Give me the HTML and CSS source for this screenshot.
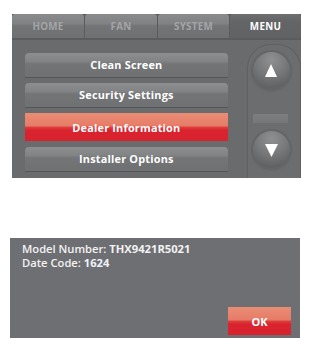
FILE: index.html
```html
<!DOCTYPE html>
<html>
<head>
<meta charset="utf-8">
<link rel="stylesheet" href="styles.css">
</head>
<body>
<div class="device">
  <div class="tabs">
    <div class="tab">HOME</div>
    <div class="tab">FAN</div>
    <div class="tab">SYSTEM</div>
    <div class="tab active">MENU</div>
  </div>
  <div class="content">
    <div class="list">
      <div class="btn gray">Clean Screen</div>
      <div class="btn gray second">Security Settings</div>
      <div class="btn red">Dealer Information</div>
      <div class="btn gray last">Installer Options</div>
    </div>
    <div class="scroll">
      <div class="circle">
        <svg width="12" height="13" viewBox="0 0 12 13"><polygon points="6,0 12,13 0,13" fill="#ffffff"/></svg>
      </div>
      <div class="bar"></div>
      <div class="circle down">
        <svg width="13" height="13" viewBox="0 0 13 13"><polygon points="0,0 13,0 6.5,13" fill="#ffffff"/></svg>
      </div>
    </div>
  </div>
</div>
<div class="info">
  <div class="text">
    <div class="line">Model Number: <b>THX9421R5021</b></div>
    <div class="line">Date Code: <b class="code">1624</b></div>
  </div>
  <div class="actions"><div class="ok">OK</div></div>
</div>
</body>
</html>
```
FILE: styles.css
```css
body {
  margin: 0;
  background: #ffffff;
  font-family: "Open Sans", "DejaVu Sans", sans-serif;
}
.device {
  margin: 14px 0 0 12px;
  width: 289px;
  height: 164px;
  background: #6a6b6d;
  display: flex;
  flex-direction: column;
}
.tabs {
  display: grid;
  grid-template-columns: 72px 72px 71px 71px;
  column-gap: 1px;
  height: 24px;
  background: #5a5b5d;
  border-bottom: 2px solid #5b5c5e;
}
.tab {
  background: linear-gradient(#8a8b8d 0%, #818284 40%, #737476 50%, #6f7072 100%);
  color: #a4a5a7;
  font-size: 9.8px;
  font-weight: 700;
  letter-spacing: 0.3px;
  display: flex;
  align-items: center;
  justify-content: center;
  border-radius: 3px 3px 0 0;
}
.tab.active {
  background: linear-gradient(#6e6f71 0%, #646567 30%, #616264 100%);
  color: #ffffff;
}
.content {
  flex: 1;
  display: flex;
}
.list {
  display: flex;
  flex-direction: column;
  padding: 13px 0 0 13px;
  width: 206px;
}
.btn {
  display: flex;
  align-items: center;
  justify-content: center;
  color: #ffffff;
  font-size: 10.9px;
  font-weight: 700;
  letter-spacing: 0.2px;
}
.gray {
  background: linear-gradient(#8d8e90 0%, #828385 35%, #747577 45%, #6f7072 100%);
  border-radius: 4px 4px 0 0;
  border-bottom: 1px solid #555658;
  padding-bottom: 1px;
  box-sizing: content-box;
  height: 23px;
}
.second {
  margin-top: 5px;
}
.red {
  margin-top: 5px;
  height: 28px;
  background: linear-gradient(#ea8d74 0%, #e67c67 45%, #de3a3a 52%, #d9232e 62%, #d8222d 100%);
}
.last {
  margin-top: 6px;
}
.scroll {
  margin: 4px 0 0 19px;
  width: 48px;
  border: 1px solid #5f6062;
  border-bottom: none;
  border-radius: 24px 24px 0 0;
  background: #6c6d6f;
  display: flex;
  flex-direction: column;
  padding: 7px 0 0 5px;
}
.circle {
  width: 37px;
  height: 37px;
  border-radius: 50%;
  background: radial-gradient(circle at 50% 22%, #8f9092 0%, #77787a 45%, #616264 80%, #5a5b5d 100%);
  box-shadow: 0 0 0 2px #646567, 0 1px 3px #555658;
  display: flex;
  align-items: center;
  justify-content: center;
}
.circle.down {
  margin-top: 8px;
}
.circle.down svg {
  margin-top: 2px;
}
.bar {
  margin-top: 25px;
  width: 35px;
  height: 9px;
  background: linear-gradient(#7d7e80, #76777a);
}
.info {
  margin: 60px 0 0 10px;
  width: 290px;
  height: 100px;
  background: #6e6f72;
  display: flex;
  flex-direction: column;
  box-sizing: border-box;
  padding: 4px 9px 3px 12px;
}
.text {
  flex: 1;
  color: #f2f2f2;
  font-size: 11.2px;
  font-weight: 600;
  line-height: 13.5px;
}
.text b {
  font-weight: 700;
}
.code {
  color: #eef3fb;
}
.actions {
  display: flex;
  justify-content: flex-end;
}
.ok {
  width: 63px;
  height: 28px;
  display: flex;
  align-items: center;
  justify-content: center;
  color: #ffffff;
  font-size: 11px;
  font-weight: 700;
  background: linear-gradient(#ea8d74 0%, #e67c67 45%, #de3a3a 52%, #d9232e 62%, #d8222d 100%);
}
```
